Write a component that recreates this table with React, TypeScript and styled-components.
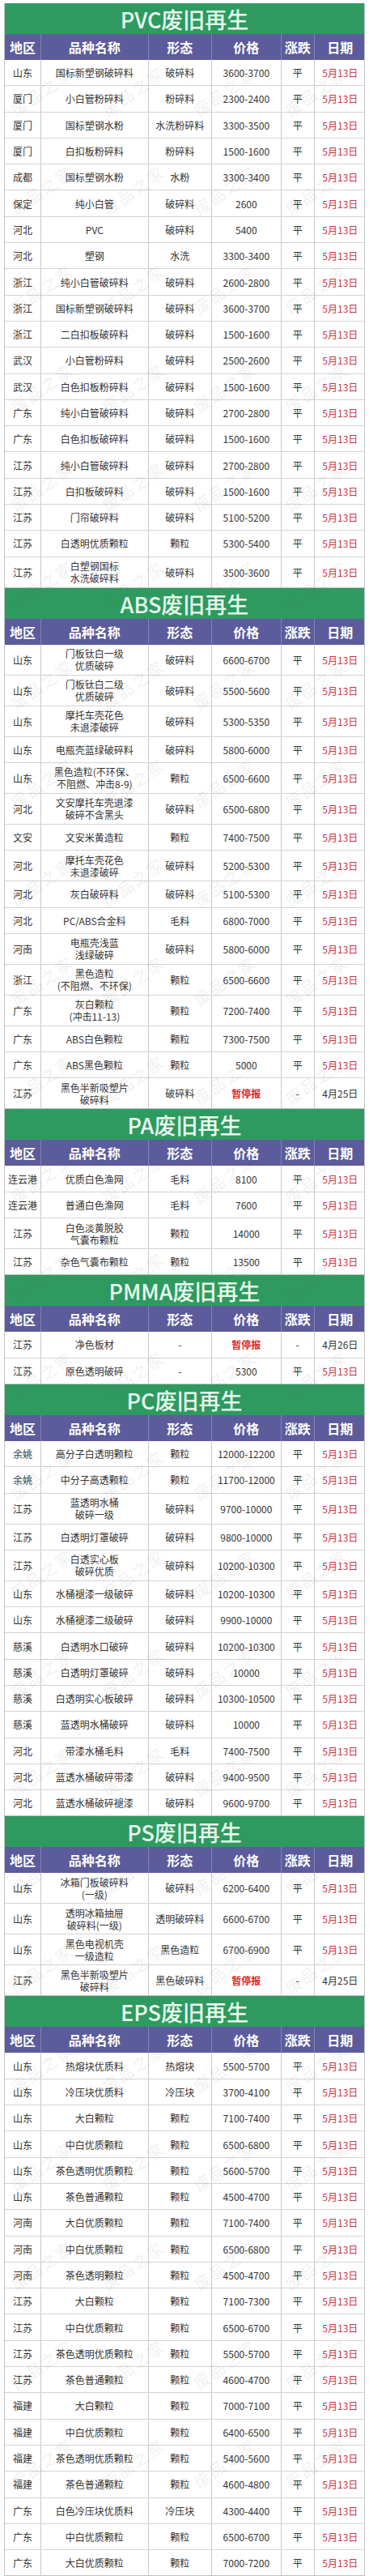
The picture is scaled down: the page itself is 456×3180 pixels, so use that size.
import styled, { createGlobalStyle } from "styled-components";

const GlobalStyle = createGlobalStyle`
  body {
    margin: 0;
    background: #ffffff;
    font-family: "Noto Sans CJK SC", "Noto Sans", "Liberation Sans", sans-serif;
  }
`;

type Row = [string, string, string, string, string, string];

type Section = {
  title: string;
  rows: Row[];
};

const D = "5月13日";

const sections: Section[] = [
  {
    title: "PVC废旧再生",
    rows: [
      ["山东", "国标新塑钢破碎料", "破碎料", "3600-3700", "平", D],
      ["厦门", "小白管粉碎料", "粉碎料", "2300-2400", "平", D],
      ["厦门", "国标塑钢水粉", "水洗粉碎料", "3300-3500", "平", D],
      ["厦门", "白扣板粉碎料", "粉碎料", "1500-1600", "平", D],
      ["成都", "国标塑钢水粉", "水粉", "3300-3400", "平", D],
      ["保定", "纯小白管", "破碎料", "2600", "平", D],
      ["河北", "PVC", "破碎料", "5400", "平", D],
      ["河北", "塑钢", "水洗", "3300-3400", "平", D],
      ["浙江", "纯小白管破碎料", "破碎料", "2600-2800", "平", D],
      ["浙江", "国标新塑钢破碎料", "破碎料", "3600-3700", "平", D],
      ["浙江", "二白扣板破碎料", "破碎料", "1500-1600", "平", D],
      ["武汉", "小白管粉碎料", "破碎料", "2500-2600", "平", D],
      ["武汉", "白色扣板粉碎料", "破碎料", "1500-1600", "平", D],
      ["广东", "纯小白管破碎料", "破碎料", "2700-2800", "平", D],
      ["广东", "白色扣板破碎料", "破碎料", "1500-1600", "平", D],
      ["江苏", "纯小白管破碎料", "破碎料", "2700-2800", "平", D],
      ["江苏", "白扣板破碎料", "破碎料", "1500-1600", "平", D],
      ["江苏", "门帘破碎料", "破碎料", "5100-5200", "平", D],
      ["江苏", "白透明优质颗粒", "颗粒", "5300-5400", "平", D],
      ["江苏", "白塑钢国标\n水洗破碎料", "破碎料", "3500-3600", "平", D],
    ],
  },
  {
    title: "ABS废旧再生",
    rows: [
      ["山东", "门板钛白一级\n优质破碎", "破碎料", "6600-6700", "平", D],
      ["山东", "门板钛白二级\n优质破碎", "破碎料", "5500-5600", "平", D],
      ["山东", "摩托车壳花色\n未退漆破碎", "破碎料", "5300-5350", "平", D],
      ["山东", "电瓶壳蓝绿破碎料", "破碎料", "5800-6000", "平", D],
      ["山东", "黑色造粒(不环保、\n不阻燃、冲击8-9)", "颗粒", "6500-6600", "平", D],
      ["河北", "文安摩托车壳退漆\n破碎不含黑头", "破碎料", "6500-6800", "平", D],
      ["文安", "文安米黄造粒", "颗粒", "7400-7500", "平", D],
      ["河北", "摩托车壳花色\n未退漆破碎", "破碎料", "5200-5300", "平", D],
      ["河北", "灰白破碎料", "破碎料", "5100-5300", "平", D],
      ["河北", "PC/ABS合金料", "毛料", "6800-7000", "平", D],
      ["河南", "电瓶壳浅蓝\n浅绿破碎", "破碎料", "5800-6000", "平", D],
      ["浙江", "黑色造粒\n(不阻燃、不环保)", "颗粒", "6500-6600", "平", D],
      ["广东", "灰白颗粒\n(冲击11-13)", "颗粒", "7200-7400", "平", D],
      ["广东", "ABS白色颗粒", "颗粒", "7300-7500", "平", D],
      ["广东", "ABS黑色颗粒", "颗粒", "5000", "平", D],
      ["江苏", "黑色半新吸塑片\n破碎料", "破碎料", "暂停报", "-", "4月25日"],
    ],
  },
  {
    title: "PA废旧再生",
    rows: [
      ["连云港", "优质白色渔网", "毛料", "8100", "平", D],
      ["连云港", "普通白色渔网", "毛料", "7600", "平", D],
      ["江苏", "白色淡黄脱胶\n气囊布颗粒", "颗粒", "14000", "平", D],
      ["江苏", "杂色气囊布颗粒", "颗粒", "13500", "平", D],
    ],
  },
  {
    title: "PMMA废旧再生",
    rows: [
      ["江苏", "净色板材", "-", "暂停报", "-", "4月26日"],
      ["江苏", "原色透明破碎", "-", "5300", "平", D],
    ],
  },
  {
    title: "PC废旧再生",
    rows: [
      ["余姚", "高分子白透明颗粒", "颗粒", "12000-12200", "平", D],
      ["余姚", "中分子高透颗粒", "颗粒", "11700-12000", "平", D],
      ["江苏", "蓝透明水桶\n破碎一级", "破碎料", "9700-10000", "平", D],
      ["江苏", "白透明灯罩破碎", "破碎料", "9800-10000", "平", D],
      ["江苏", "白透实心板\n破碎优质", "破碎料", "10200-10300", "平", D],
      ["山东", "水桶褪漆一级破碎", "破碎料", "10200-10300", "平", D],
      ["山东", "水桶褪漆二级破碎", "破碎料", "9900-10000", "平", D],
      ["慈溪", "白透明水口破碎", "破碎料", "10200-10300", "平", D],
      ["慈溪", "白透明灯罩破碎", "破碎料", "10000", "平", D],
      ["慈溪", "白透明实心板破碎", "破碎料", "10300-10500", "平", D],
      ["慈溪", "蓝透明水桶破碎", "破碎料", "10000", "平", D],
      ["河北", "带漆水桶毛料", "毛料", "7400-7500", "平", D],
      ["河北", "蓝透水桶破碎带漆", "破碎料", "9400-9500", "平", D],
      ["河北", "蓝透水桶破碎褪漆", "破碎料", "9600-9700", "平", D],
    ],
  },
  {
    title: "PS废旧再生",
    rows: [
      ["山东", "冰箱门板破碎料\n(一级)", "破碎料", "6200-6400", "平", D],
      ["山东", "透明冰箱抽屉\n破碎料(一级)", "透明破碎料", "6600-6700", "平", D],
      ["山东", "黑色电视机壳\n一级造粒", "黑色造粒", "6700-6900", "平", D],
      ["江苏", "黑色半新吸塑片\n破碎料", "黑色破碎料", "暂停报", "-", "4月25日"],
    ],
  },
  {
    title: "EPS废旧再生",
    rows: [
      ["山东", "热熔块优质料", "热熔块", "5500-5700", "平", D],
      ["山东", "冷压块优质料", "冷压块", "3700-4100", "平", D],
      ["山东", "大白颗粒", "颗粒", "7100-7400", "平", D],
      ["山东", "中白优质颗粒", "颗粒", "6500-6800", "平", D],
      ["山东", "茶色透明优质颗粒", "颗粒", "5600-5700", "平", D],
      ["山东", "茶色普通颗粒", "颗粒", "4500-4700", "平", D],
      ["河南", "大白优质颗粒", "颗粒", "7100-7400", "平", D],
      ["河南", "中白优质颗粒", "颗粒", "6500-6800", "平", D],
      ["河南", "茶色透明颗粒", "颗粒", "4500-4700", "平", D],
      ["江苏", "大白颗粒", "颗粒", "7100-7300", "平", D],
      ["江苏", "中白优质颗粒", "颗粒", "6500-6700", "平", D],
      ["江苏", "茶色透明优质颗粒", "颗粒", "5500-5700", "平", D],
      ["江苏", "茶色普通颗粒", "颗粒", "4600-4700", "平", D],
      ["福建", "大白颗粒", "颗粒", "7000-7100", "平", D],
      ["福建", "中白优质颗粒", "颗粒", "6400-6500", "平", D],
      ["福建", "茶色透明优质颗粒", "颗粒", "5400-5600", "平", D],
      ["福建", "茶色普通颗粒", "颗粒", "4600-4800", "平", D],
      ["广东", "白色冷压块优质料", "冷压块", "4300-4400", "平", D],
      ["广东", "中白优质颗粒", "颗粒", "6500-6700", "平", D],
      ["广东", "大白优质颗粒", "颗粒", "7000-7200", "平", D],
    ],
  },
];

const headers = ["地区", "品种名称", "形态", "价格", "涨跌", "日期"];

const COLS = "45px 132.7px 78.3px 85.7px 41px 63.3px";

// faint diagonal "废品之家" stamps tiled over the sheet, kept inside its edges
const marks: { x: number; y: number }[] = [];
for (let r = 0; r < 25; r++) {
  for (let c = 0; c < 4; c++) {
    marks.push({ x: 10 + c * 113, y: 130 + r * 122 });
  }
}

const Page = styled.div`
  position: relative;
  width: 456px;
  box-sizing: border-box;
  padding: 4px 5px 5px;
`;

const Table = styled.div`
  display: flex;
  flex-direction: column;
  border-left: 1px solid #c2c2c2;
  border-right: 1px solid #c2c2c2;
`;

const TitleBar = styled.div`
  height: 38px;
  display: flex;
  align-items: center;
  justify-content: center;
  background: #2f9a60;
  color: #e8fcef;
  font-size: 27px;
  font-weight: 500;
  line-height: 1;
  padding-top: 1px;
  box-sizing: border-box;
`;

const HeaderRow = styled.div`
  height: 32px;
  display: grid;
  grid-template-columns: ${COLS};
  background: #5c5b9c;
  color: #ffffff;
  font-size: 16px;
  font-weight: 700;
`;

const HeaderCell = styled.div`
  display: flex;
  align-items: center;
  justify-content: center;
  border-right: 1px solid #8483b6;
  &:last-child {
    border-right: none;
  }
`;

const BodyRow = styled.div<{ $tall: boolean }>`
  height: ${(p) => (p.$tall ? "38px" : "32.3px")};
  box-sizing: border-box;
  display: grid;
  grid-template-columns: ${COLS};
  background: #ffffff;
  border-bottom: 1px solid #d3d3d3;
  &:last-child {
    border-bottom: 1px solid #c2c2c2;
  }
`;

const Cell = styled.div<{ $tone?: "date" | "stop" | "plain" }>`
  display: flex;
  align-items: center;
  justify-content: center;
  text-align: center;
  white-space: pre-line;
  font-size: 12px;
  line-height: 15px;
  color: ${(p) =>
    p.$tone === "date" ? "#cc3344" : p.$tone === "stop" ? "#e01e1e" : "#333333"};
  font-weight: ${(p) => (p.$tone === "stop" ? 700 : 400)};
  border-right: 1px solid #c8c8c8;
  &:last-child {
    border-right: none;
  }
`;

const Watermarks = styled.div`
  position: absolute;
  inset: 0;
  pointer-events: none;
`;

const Mark = styled.span`
  position: absolute;
  font-size: 20px;
  font-weight: 500;
  letter-spacing: 2px;
  line-height: 1;
  color: rgba(110, 110, 110, 0.09);
  transform: rotate(-35deg);
  transform-origin: left top;
  white-space: nowrap;
`;

const SectionBlock = ({ section }: { section: Section }) => (
  <>
    <TitleBar>{section.title}</TitleBar>
    <HeaderRow>
      {headers.map((h) => (
        <HeaderCell key={h}>{h}</HeaderCell>
      ))}
    </HeaderRow>
    <div>
      {section.rows.map((r, i) => (
        <BodyRow key={i} $tall={r[1].includes("\n")}>
          <Cell>{r[0]}</Cell>
          <Cell>{r[1]}</Cell>
          <Cell>{r[2]}</Cell>
          <Cell $tone={r[3] === "暂停报" ? "stop" : "plain"}>{r[3]}</Cell>
          <Cell>{r[4]}</Cell>
          <Cell $tone={r[5] === D ? "date" : "plain"}>{r[5]}</Cell>
        </BodyRow>
      ))}
    </div>
  </>
);

export default function App() {
  return (
    <Page>
      <GlobalStyle />
      <Table>
        {sections.map((s) => (
          <SectionBlock key={s.title} section={s} />
        ))}
      </Table>
      <Watermarks>
        {marks.map((m, i) => (
          <Mark key={i} style={{ left: m.x, top: m.y }}>
            废品之家
          </Mark>
        ))}
      </Watermarks>
    </Page>
  );
}
